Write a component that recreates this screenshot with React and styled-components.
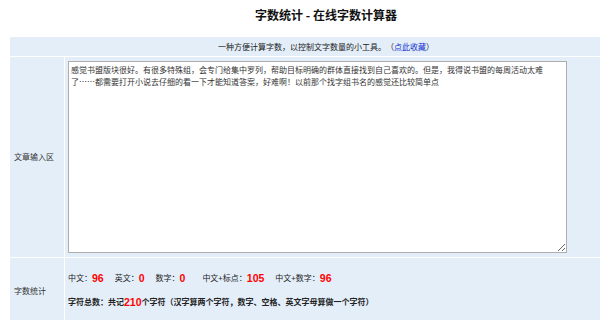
import React from "react";
import styled, { createGlobalStyle } from "styled-components";

const Global = createGlobalStyle`
  html, body { margin: 0; padding: 0; background: #fff; overflow: hidden; }
  body {
    font-family: "Noto Sans CJK SC", "Liberation Sans", sans-serif;
    color: #222;
    text-spacing-trim: space-all;
  }
`;

const Page = styled.div`
  width: 590px;
  margin-left: 10px;
`;

const Title = styled.h1`
  margin: 0;
  padding: 7px 0 0 42px;
  height: 30px;
  box-sizing: border-box;
  font-size: 12px;
  line-height: 16px;
  font-weight: bold;
  text-align: center;
  color: #111;
`;

const Table = styled.div`
  display: grid;
  grid-template-columns: 54px 1fr;
  gap: 1px;
  background: #fff;
  margin-top: 7px;
`;

const Cell = styled.div`
  background: #e4eef9;
  font-size: 8px;
  line-height: 12px;
`;

const Header = styled(Cell)`
  grid-column: 1 / span 2;
  height: 19px;
  padding-left: 42px;
  display: flex;
  align-items: center;
  justify-content: center;
  color: #222;
`;

const Link = styled.a`
  color: #1030d0;
  text-decoration: none;
`;

const Label = styled(Cell)`
  display: flex;
  align-items: center;
  padding-left: 4px;
  color: #333;
`;

const InputCell = styled(Cell)`
  padding: 4px 3px;
  height: 200px;
  box-sizing: border-box;
`;

const TextArea = styled.textarea`
  display: block;
  box-sizing: border-box;
  width: 499px;
  height: 192px;
  margin: 0;
  padding: 2px;
  border: 1px solid #aeaeae;
  background: #fff;
  font-family: "Noto Sans CJK SC", sans-serif;
  font-size: 8px;
  line-height: 12px;
  color: #333;
  outline: none;
  text-spacing-trim: space-all;
`;

const StatsCell = styled(Cell)`
  height: 66px;
  box-sizing: border-box;
  padding: 13px 3px 0 3px;
`;

const StatLine = styled.div`
  display: flex;
  align-items: center;
  height: 14px;
  font-weight: ${(p) => (p.$bold ? "bold" : "normal")};
  margin-bottom: 10px;
  white-space: nowrap;
`;

const Stat = styled.span`
  margin-right: ${(p) => p.$gap || 11}px;
  display: inline-flex;
  align-items: center;
`;

const Num = styled.span`
  color: #ff0000;
  font-family: "Liberation Sans", Arial, sans-serif;
  font-weight: bold;
  font-size: 10.5px;
`;

const text =
  "感觉书盟版块很好。有很多特殊组，会专门给集中罗列，帮助目标明确的群体直接找到自己喜欢的。但是，我得说书盟的每周活动太难了……都需要打开小说去仔细的看一下才能知道答案，好难啊！以前那个找字组书名的感觉还比较简单点";

export default function App() {
  return (
    <Page>
      <Global />
      <Title>字数统计 - 在线字数计算器</Title>
      <Table>
        <Header>
          一种方便计算字数，以控制文字数量的小工具。（<Link href="#">点此收藏</Link>）
        </Header>
        <Label>文章输入区</Label>
        <InputCell>
          <TextArea defaultValue={text} spellCheck={false} />
        </InputCell>
        <Label>字数统计</Label>
        <StatsCell>
          <StatLine>
            <Stat>中文：<Num>96</Num></Stat>
            <Stat>英文：<Num>0</Num></Stat>
            <Stat $gap={17}>数字：<Num>0</Num></Stat>
            <Stat>中文+标点：<Num>105</Num></Stat>
            <Stat>中文+数字：<Num>96</Num></Stat>
          </StatLine>
          <StatLine $bold>
            字符总数：共记<Num>210</Num>个字符（汉字算两个字符，数字、空格、英文字母算做一个字符）
          </StatLine>
        </StatsCell>
      </Table>
    </Page>
  );
}
